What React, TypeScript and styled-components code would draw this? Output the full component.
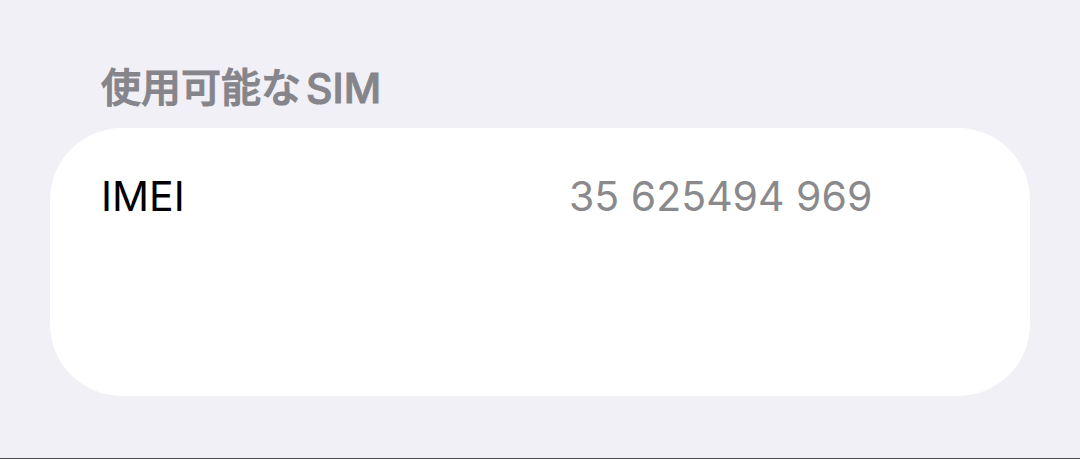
import React from 'react';
import styled, { createGlobalStyle } from 'styled-components';

const GlobalStyle = createGlobalStyle`
  * { box-sizing: border-box; }
  body {
    margin: 0;
    background: #f1f0f6;
    font-family: Inter, "Noto Sans CJK JP", sans-serif;
  }
`;

const Page = styled.main`
  display: flex;
  flex-direction: column;
  min-height: 100vh;
  padding: 60px 50px 0;
  border-bottom: 1px solid #4a4a4c;
`;

const SectionTitle = styled.h2`
  margin: 0;
  padding: 0 51px;
  font-size: 40px;
  line-height: 56px;
  font-weight: 500;
  color: #85858b;
  -webkit-text-stroke: 1px #85858b;
  display: flex;
  gap: 5px;
`;

const Latin = styled.span`
  font-size: 41px;
`;

const Card = styled.dl`
  margin: 12px 0 0;
  min-height: 268px;
  padding: 40px 51px;
  border-radius: 72px;
  background: #ffffff;
`;

const Row = styled.div`
  display: grid;
  grid-template-columns: 468px 1fr;
  font-size: 41px;
  line-height: 56px;
`;

const Label = styled.dt`
  color: #000000;
`;

const Value = styled.dd`
  margin: 0;
  color: #8a8a8c;
  white-space: nowrap;
`;

export default function App() {
  return (
    <>
      <GlobalStyle />
      <Page>
        <SectionTitle lang="ja">
          <span>使用可能な</span>
          <Latin>SIM</Latin>
        </SectionTitle>
        <Card>
          <Row>
            <Label>IMEI</Label>
            <Value>35 625494 969</Value>
          </Row>
        </Card>
      </Page>
    </>
  );
}
